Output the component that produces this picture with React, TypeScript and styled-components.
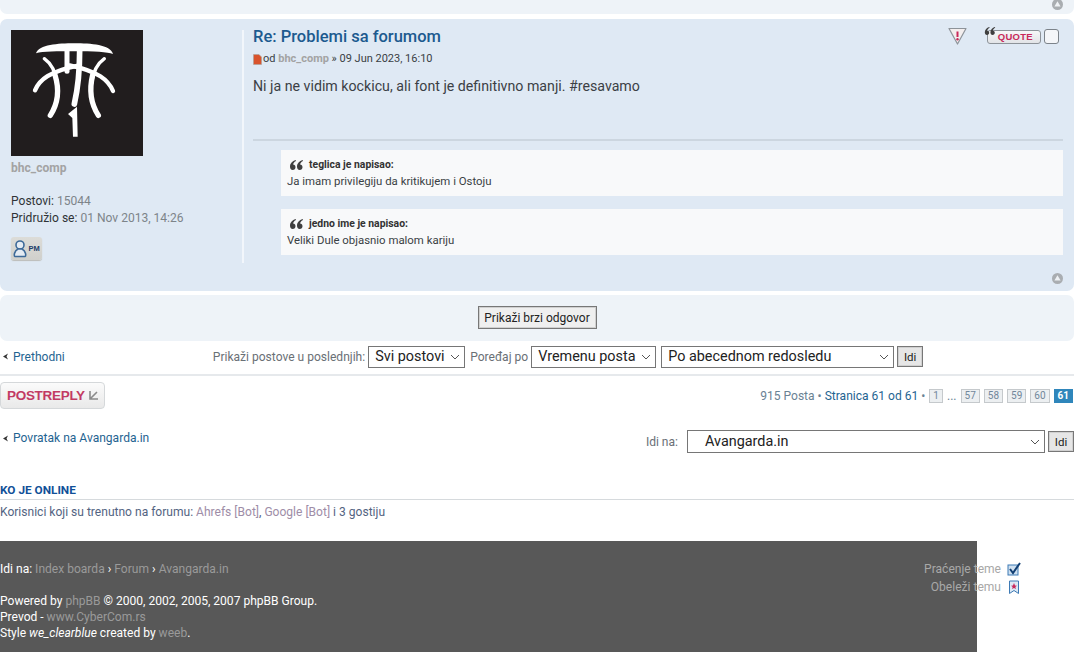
import React from 'react'
import styled, { createGlobalStyle } from 'styled-components'

const GlobalStyle = createGlobalStyle`
  html, body {
    margin: 0;
    padding: 0;
    background: #fff;
  }
  body {
    font-family: Roboto, "Liberation Sans", sans-serif;
    font-size: 12.05px;
    color: #333;
  }
`

const Page = styled.div`
  width: 1077px;
  height: 652px;
  overflow: hidden;
  position: relative;
`

const TopSliver = styled.div`
  width: 1074px;
  height: 14px;
  background: #eef3f8;
  border-radius: 0 0 7px 7px;
  display: flex;
  justify-content: flex-end;
  padding-right: 11px;
  box-sizing: border-box;
  align-items: flex-start;
  margin-bottom: 5px;
  overflow: hidden;
`

const Post = styled.div`
  width: 1074px;
  height: 272px;
  box-sizing: border-box;
  background: #dfe9f4;
  border-radius: 7px;
  padding: 11px 11px 0;
  display: flex;
  position: relative;
`

const Profile = styled.div`
  width: 231px;
  flex-shrink: 0;
  height: 233px;
  display: flex;
  flex-direction: column;
  align-items: flex-start;
`

const Avatar = styled.svg`
  width: 132px;
  height: 126px;
  display: block;
`

const ProfileName = styled.div`
  font-weight: 700;
  color: #a3a3a3;
  margin-top: 5px;
  line-height: 15px;
`

const ProfileStats = styled.div`
  margin-top: 17px;
  line-height: 17px;
  color: #2f3336;
`

const Muted = styled.span`
  color: #7d8489;
`

const PmButton = styled.div`
  margin-top: 10px;
  width: 31px;
  height: 23px;
  border-radius: 3px;
  background: linear-gradient(#dcdcd8, #d0d0cc);
  box-shadow: 0 1px 1px #bcbcb8;
  display: flex;
  align-items: center;
  justify-content: center;
  gap: 1px;
  font: 700 7.5px "Liberation Sans", sans-serif;
  color: #23406a;
`

const PostBody = styled.div`
  flex: 1;
  border-left: 2px solid #f2f6fb;
  height: 233px;
  padding-left: 9px;
  display: flex;
  flex-direction: column;
  min-width: 0;
`

const Title = styled.div`
  font-size: 16.5px;
  font-weight: 500;
  color: #1c5a8f;
  line-height: 19px;
  margin-top: -3px;
`

const Meta = styled.div`
  margin-top: 6px;
  font-size: 11px;
  line-height: 14px;
  display: flex;
  align-items: center;
  gap: 1px;
  color: #3a3f44;
`

const Author = styled.span`
  color: #a3a3a3;
  font-weight: 700;
`

const Content = styled.div`
  margin-top: 11px;
  font-size: 14.2px;
  line-height: 18px;
  height: 62px;
  color: #3b4045;
`

const Divider = styled.div`
  height: 2px;
  background: #ccd6e0;
`

const Signature = styled.div`
  margin: 9px 0 0 28px;
  display: flex;
  flex-direction: column;
  gap: 13px;
`

const SigQuote = styled.div`
  background: #f8f9fa;
  height: 46px;
  box-sizing: border-box;
  padding: 7px 6px 0;
  font-size: 11.4px;
  color: #3a3f44;
`

const SigHeader = styled.div`
  display: flex;
  align-items: center;
  gap: 5px;
  font-size: 10.4px;
  font-weight: 700;
  line-height: 14px;
  height: 15px;
  padding-left: 2px;
  color: #333;
`

const SigText = styled.div`
  line-height: 14px;
  margin-top: 2px;
`

const PostActions = styled.div`
  position: absolute;
  top: 8px;
  right: 15px;
  display: flex;
  align-items: flex-start;
`

const QuoteButton = styled.div`
  position: relative;
  margin-left: 20px;
  margin-top: 3px;
  width: 54px;
  height: 14px;
  box-sizing: border-box;
  border: 1px solid #8d9399;
  border-radius: 3px;
  background: linear-gradient(#f6f7f8, #e2e4e7);
  font: 700 9.5px "Liberation Sans", sans-serif;
  letter-spacing: 0.3px;
  color: #c8295a;
  text-align: right;
  padding-right: 7px;
  line-height: 11px;
`

const QuoteMarks = styled.svg`
  position: absolute;
  left: -4px;
  top: -4px;
  width: 12px;
  height: 8px;
`

const CheckBox = styled.div`
  width: 13px;
  height: 13px;
  margin: 2px 0 0 3px;
  border: 1px solid #7c838a;
  border-radius: 3px;
  background: #f4f6f9;
`

const UpIcon = styled.svg`
  width: 11px;
  height: 11px;
  display: block;
  flex-shrink: 0;
  margin-top: -1px;
`

const PostUp = styled(UpIcon)`
  position: absolute;
  right: 11px;
  bottom: 7px;
`

const QuickBar = styled.div`
  width: 1074px;
  height: 46px;
  margin-top: 4px;
  background: #eef3f8;
  border-radius: 7px;
  display: flex;
  align-items: center;
  justify-content: center;
  box-sizing: border-box;
  padding-bottom: 1px;
`

const PlainButton = styled.button<{ $small?: boolean }>`
  font-family: Roboto, "Liberation Sans", sans-serif;
  font-size: ${p => (p.$small ? 11.5 : 12)}px;
  color: #222;
  background: ${p => (p.$small ? '#e6e6e6' : '#efefef')};
  border: 1px solid #777;
  box-shadow: 0 0 0 1px #d0d0d0 inset;
  padding: 0;
  height: ${p => (p.$small ? 21 : 23)}px;
  width: ${p => (p.$small ? 26 : 119)}px;
  margin-left: ${p => (p.$small ? 3 : 0)}px;
`

const ActionRow = styled.div`
  width: 1074px;
  height: 34px;
  display: flex;
  align-items: center;
  border-bottom: 2px solid #e6e9ec;
  box-sizing: border-box;
  padding-bottom: 3px;
  margin-top: 1px;
`

const BackLink = styled.a<{ $mt?: number }>`
  color: #1f6491;
  display: flex;
  align-items: center;
  gap: 4px;
  line-height: 14px;
  margin-top: ${p => p.$mt ?? 0}px;
`

const BackArrow = styled.svg`
  width: 7px;
  height: 7px;
  margin-left: 2px;
`

const SortControls = styled.div`
  margin-left: 148px;
  display: flex;
  align-items: center;
  color: #6a7076;
`

const SortLabel = styled.span<{ $ml?: number }>`
  margin: 0 3px 0 ${p => p.$ml ?? 0}px;
`

const Select = styled.div<{ $w: number; $h?: number; $pl?: number; $ml?: number }>`
  width: ${p => p.$w}px;
  height: ${p => p.$h ?? 22}px;
  margin-left: ${p => p.$ml ?? 0}px;
  box-sizing: border-box;
  border: 1px solid #767676;
  background: #fff;
  color: #222;
  font-size: 14.4px;
  display: flex;
  align-items: center;
  justify-content: space-between;
  padding: 0 4px 0 ${p => p.$pl ?? 6}px;
`

const Chevron = styled.svg`
  width: 10px;
  height: 6px;
  flex-shrink: 0;
`

const ReplyRow = styled.div`
  width: 1074px;
  margin-top: 5px;
  display: flex;
  justify-content: space-between;
  align-items: center;
  height: 28px;
`

const ReplyButton = styled.div`
  width: 105px;
  height: 27px;
  box-sizing: border-box;
  border: 1px solid #d5d8da;
  border-radius: 4px;
  background: linear-gradient(#fbfbfb, #e9e9e9);
  display: flex;
  align-items: center;
  padding-left: 6px;
  gap: 4px;
  font: 700 13.5px "Liberation Sans", sans-serif;
  letter-spacing: -0.3px;
  color: #c23a63;
`

const Pagination = styled.div`
  display: flex;
  align-items: center;
  color: #6a8294;
  gap: 4px;
  padding-right: 1px;
  margin-top: 2px;
`

const PageLink = styled.span`
  color: #1f6491;
`

const PageBox = styled.span<{ $active?: boolean }>`
  height: 14px;
  min-width: 13px;
  padding: 0 3px;
  box-sizing: border-box;
  border: 1px solid ${p => (p.$active ? '#2f86bb' : '#c5c9cc')};
  background: ${p => (p.$active ? '#2f86bb' : '#eceff1')};
  color: ${p => (p.$active ? '#fff' : '#71879b')};
  font-size: 10px;
  font-weight: ${p => (p.$active ? 700 : 400)};
  line-height: 12px;
  text-align: center;
`

const JumpRow = styled.div`
  width: 1074px;
  margin-top: 21px;
  display: flex;
  justify-content: space-between;
  align-items: flex-start;
  height: 24px;
`

const JumpControls = styled.div`
  display: flex;
  align-items: center;
  color: #6a7076;
`

const OnlineTitle = styled.div`
  margin-top: 29px;
  width: 1074px;
  font-size: 11.8px;
  font-weight: 700;
  color: #115098;
  line-height: 14px;
  padding-bottom: 2px;
  border-bottom: 1px solid #d6dadd;
`

const OnlineText = styled.div`
  margin-top: 5px;
  line-height: 15px;
  color: #536482;
`

const Bot = styled.span`
  color: #9e8da7;
`

const Footer = styled.div`
  margin-top: 21px;
  width: 977px;
  height: 111px;
  background: #585858;
  color: #fff;
  line-height: 16px;
  padding-top: 20px;
  box-sizing: border-box;
`

const FooterBlock = styled.div`
  margin-top: 16px;
`

const FooterLink = styled.span`
  color: #9a9a9a;
`

const TopicTools = styled.div`
  position: absolute;
  top: 561px;
  right: 56px;
  display: flex;
  flex-direction: column;
  gap: 2px;
  color: #a8a8a8;
  line-height: 16px;
`

const ToolRow = styled.div`
  display: flex;
  align-items: center;
  justify-content: flex-end;
  gap: 6px;
`

const ToolIcon = styled.svg`
  width: 14px;
  height: 14px;
`

const up = (
  <>
    <circle cx="5.5" cy="5.5" r="5.5" fill="#a9adb1" />
    <path d="M5.5 2.2 L8.6 7.6 H2.4 Z" fill="#eef1f4" />
  </>
)

const chevron = <path d="M1 1 L5 5 L9 1" fill="none" stroke="#555" strokeWidth="1" />

const backArrow = <path d="M6 0.5 L1 3.5 L6 6.5 L4.5 3.5 Z" fill="#333" />

const quoteMarkPaths = (
  <>
    <path d="M6 0 C3 1 0.5 3.5 0.5 6.5 C0.5 8.5 1.5 10 3.2 10 C5 10 6 8.7 6 7.2 C6 5.6 5 4.6 3.6 4.6 C3.8 3 5 1.6 6.6 1 Z" fill="#3f3f3f" />
    <path d="M13 0 C10 1 7.5 3.5 7.5 6.5 C7.5 8.5 8.5 10 10.2 10 C12 10 13 8.7 13 7.2 C13 5.6 12 4.6 10.6 4.6 C10.8 3 12 1.6 13.6 1 Z" fill="#3f3f3f" />
  </>
)

const quoteMarks = (
  <svg width="15" height="10" viewBox="0 0 14 10">
    {quoteMarkPaths}
  </svg>
)

export default function App() {
  return (
    <Page>
      <GlobalStyle />
      <TopSliver>
        <UpIcon viewBox="0 0 11 11">{up}</UpIcon>
      </TopSliver>
      <Post>
        <Profile>
          <Avatar viewBox="0 0 396 378">
            <rect width="396" height="378" fill="#211d1e" />
            <path
              d="M75 70 C85 44 140 40 190 40 C240 40 298 44 306 72 C290 66 250 64 190 64 C140 64 95 64 75 70 Z"
              fill="#fff"
            />
            <g fill="none" stroke="#fff" strokeLinecap="round">
              <path d="M168 60 V124" strokeWidth="15" />
              <path d="M206 60 C206 120 202 170 190 222" strokeWidth="17" />
              <path d="M72 181 C85 150 115 124 204 106" strokeWidth="13" />
              <path d="M306 183 C292 150 262 124 176 106" strokeWidth="13" />
              <path d="M100 86 C120 100 134 125 138 160" strokeWidth="10" />
              <path d="M280 86 C260 100 246 125 242 160" strokeWidth="10" />
              <path d="M132 135 C146 180 140 222 118 256" strokeWidth="16" />
              <path d="M245 135 C234 180 240 222 262 256" strokeWidth="16" />
            </g>
            <path d="M171 252 L198 230 L200 320 L186 320 L184 264 Z" fill="#fff" />
          </Avatar>
          <ProfileName>bhc_comp</ProfileName>
          <ProfileStats>
            Postovi: <Muted>15044</Muted>
            <br />
            Pridružio se: <Muted>01 Nov 2013, 14:26</Muted>
          </ProfileStats>
          <PmButton>
            <svg width="14" height="18" viewBox="0 0 14 18">
              <circle cx="7" cy="5" r="4" fill="#e4ebf3" stroke="#3d6a99" strokeWidth="1.6" />
              <path d="M5 9 C1 11 0.8 16 2 16.5 H12 C13.2 16 13 11 9 9 Z" fill="#e4ebf3" stroke="#3d6a99" strokeWidth="1.6" />
            </svg>
            PM
          </PmButton>
        </Profile>
        <PostBody>
          <Title>Re: Problemi sa forumom</Title>
          <Meta>
            <svg width="9" height="11" viewBox="0 0 9 11">
              <path d="M0.5 0.5 H6 L8.5 3 V10.5 H0.5 Z" fill="#d9532c" stroke="#a8a29a" strokeWidth="0.6" />
            </svg>
            <span>
              od <Author>bhc_comp</Author> » 09 Jun 2023, 16:10
            </span>
          </Meta>
          <Content>Ni ja ne vidim kockicu, ali font je definitivno manji. #resavamo</Content>
          <Divider />
          <Signature>
            <SigQuote>
              <SigHeader>
                {quoteMarks}
                teglica je napisao:
              </SigHeader>
              <SigText>Ja imam privilegiju da kritikujem i Ostoju</SigText>
            </SigQuote>
            <SigQuote>
              <SigHeader>
                {quoteMarks}
                jedno ime je napisao:
              </SigHeader>
              <SigText>Veliki Dule objasnio malom kariju</SigText>
            </SigQuote>
          </Signature>
        </PostBody>
        <PostActions>
          <svg width="19" height="18" viewBox="0 0 19 18">
            <path d="M1 1.5 H18 L9.5 17 Z" fill="#f3eeee" stroke="#8d9399" strokeWidth="1.2" strokeLinejoin="round" />
            <path d="M9.5 4.5 V10" stroke="#c8295a" strokeWidth="2" />
            <circle cx="9.5" cy="12.3" r="1.2" fill="#c8295a" />
          </svg>
          <QuoteButton>
            <QuoteMarks viewBox="0 0 14 10">{quoteMarkPaths}</QuoteMarks>
            QUOTE
          </QuoteButton>
          <CheckBox />
        </PostActions>
        <PostUp viewBox="0 0 11 11">{up}</PostUp>
      </Post>
      <QuickBar>
        <PlainButton>Prikaži brzi odgovor</PlainButton>
      </QuickBar>
      <ActionRow>
        <BackLink>
          <BackArrow viewBox="0 0 7 7">{backArrow}</BackArrow>
          Prethodni
        </BackLink>
        <SortControls>
          <SortLabel>Prikaži postove u poslednjih:</SortLabel>
          <Select $w={97}>
            Svi postovi
            <Chevron viewBox="0 0 10 6">{chevron}</Chevron>
          </Select>
          <SortLabel $ml={5}>Poređaj po</SortLabel>
          <Select $w={125}>
            Vremenu posta
            <Chevron viewBox="0 0 10 6">{chevron}</Chevron>
          </Select>
          <Select $w={233} $ml={5}>
            Po abecednom redosledu
            <Chevron viewBox="0 0 10 6">{chevron}</Chevron>
          </Select>
          <PlainButton $small>Idi</PlainButton>
        </SortControls>
      </ActionRow>
      <ReplyRow>
        <ReplyButton>
          <span>POSTREPLY</span>
          <svg width="10" height="10" viewBox="0 0 10 10">
            <path d="M1 1 V9 H9 M1.5 8.5 L8 2" fill="none" stroke="#8b8b8b" strokeWidth="1.6" />
          </svg>
        </ReplyButton>
        <Pagination>
          <span>
            915 Posta • <PageLink>Stranica 61 od 61</PageLink> •
          </span>
          <PageBox>1</PageBox>
          <span>...</span>
          <PageBox>57</PageBox>
          <PageBox>58</PageBox>
          <PageBox>59</PageBox>
          <PageBox>60</PageBox>
          <PageBox $active>61</PageBox>
        </Pagination>
      </ReplyRow>
      <JumpRow>
        <BackLink $mt={1}>
          <BackArrow viewBox="0 0 7 7">{backArrow}</BackArrow>
          Povratak na Avangarda.in
        </BackLink>
        <JumpControls>
          Idi na:
          <Select $w={358} $h={23} $pl={17} $ml={9}>
            Avangarda.in
            <Chevron viewBox="0 0 10 6">{chevron}</Chevron>
          </Select>
          <PlainButton $small>Idi</PlainButton>
        </JumpControls>
      </JumpRow>
      <OnlineTitle>KO JE ONLINE</OnlineTitle>
      <OnlineText>
        Korisnici koji su trenutno na forumu: <Bot>Ahrefs [Bot]</Bot>, <Bot>Google [Bot]</Bot> i 3 gostiju
      </OnlineText>
      <Footer>
        <div>
          Idi na: <FooterLink>Index boarda</FooterLink> › <FooterLink>Forum</FooterLink> ›{' '}
          <FooterLink>Avangarda.in</FooterLink>
        </div>
        <FooterBlock>
          Powered by <FooterLink>phpBB</FooterLink> © 2000, 2002, 2005, 2007 phpBB Group.
          <br />
          Prevod - <FooterLink>www.CyberCom.rs</FooterLink>
          <br />
          Style <em>we_clearblue</em> created by <FooterLink>weeb</FooterLink>.
        </FooterBlock>
      </Footer>
      <TopicTools>
        <ToolRow>
          Praćenje teme
          <ToolIcon viewBox="0 0 14 14">
            <rect x="1" y="3" width="10" height="10" fill="#cfe0f0" stroke="#3d7ab5" />
            <path d="M3 7 L6 11 L13 1" fill="none" stroke="#123f73" strokeWidth="2" />
          </ToolIcon>
        </ToolRow>
        <ToolRow>
          Obeleži temu
          <ToolIcon viewBox="0 0 14 14">
            <path d="M2.5 1 H11.5 V13.5 L7 10.5 L2.5 13.5 Z" fill="#dce8f4" stroke="#3d7ab5" />
            <path d="M7 3 L8 5.5 L10 5.7 L8.3 7 L9 9 L7 8 L5 9 L5.7 7 L4 5.7 L6 5.5 Z" fill="#c8295a" />
          </ToolIcon>
        </ToolRow>
      </TopicTools>
    </Page>
  )
}
